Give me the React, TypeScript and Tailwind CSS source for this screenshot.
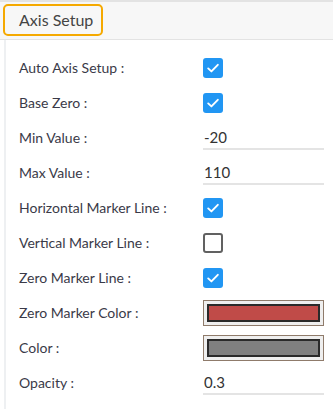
import React from 'react'

type Row =
  | { label: string; kind: 'check'; checked: boolean }
  | { label: string; kind: 'text'; value: string }
  | { label: string; kind: 'color'; color: string }

const rows: Row[] = [
  { label: 'Auto Axis Setup :', kind: 'check', checked: true },
  { label: 'Base Zero :', kind: 'check', checked: true },
  { label: 'Min Value :', kind: 'text', value: '-20' },
  { label: 'Max Value :', kind: 'text', value: '110' },
  { label: 'Horizontal Marker Line :', kind: 'check', checked: true },
  { label: 'Vertical Marker Line :', kind: 'check', checked: false },
  { label: 'Zero Marker Line :', kind: 'check', checked: true },
  { label: 'Zero Marker Color :', kind: 'color', color: '#c04b48' },
  { label: 'Color :', kind: 'color', color: '#808080' },
  { label: 'Opacity :', kind: 'text', value: '0.3' },
]

const Check = ({ checked }: { checked: boolean }) =>
  checked ? (
    <span className="flex size-[20px] items-center justify-center rounded-[3px] bg-[#2196f3]">
      <svg width="14" height="14" viewBox="0 0 14 14" fill="none">
        <path d="M2.2 7.4 L5.4 10.4 L11.8 3.8" stroke="white" strokeWidth="1.9" strokeLinecap="round" strokeLinejoin="round" />
      </svg>
    </span>
  ) : (
    <span className="block size-[20px] rounded-[3px] border-2 border-[#616161] bg-white" />
  )

const Field = ({ row }: { row: Row }) => {
  if (row.kind === 'check') return <Check checked={row.checked} />
  if (row.kind === 'text')
    return (
      <div className="flex h-[24px] w-[121px] items-start border-b-2 border-[#e4e4e4] pl-[1px] text-[15px] text-[#333]">
        {row.value}
      </div>
    )
  return (
    <div className="h-[26px] w-[121px] border border-[#8f7b6b] bg-[#efefef] p-[3px]">
      <div className="h-full w-full border-2 border-[#2a2a2a]" style={{ backgroundColor: row.color }} />
    </div>
  )
}

export default function App() {
  return (
    <div className="h-[409px] w-[333px] overflow-hidden bg-white font-['Lato',sans-serif] text-[#3a3a48]">
      <div className="flex h-[40px] items-start border-t-2 border-b border-[#e3e3e3] bg-[#f7f7f7] pl-[3px] pt-[2px]">
        <div className="flex h-[32px] w-[100px] items-center rounded-[5px] border-2 border-[#f5a900] pl-[14px] text-[16px] text-[#444]">
          Axis Setup
        </div>
      </div>
      <div className="ml-[4px] h-full border-l-2 border-[#eef0f2] pl-[13px] pt-[10px]">
        {rows.map((row) => (
          <div key={row.label} className="flex h-[35px] items-center">
            <div className="w-[184px] text-[14px]">{row.label}</div>
            <Field row={row} />
          </div>
        ))}
      </div>
    </div>
  )
}
